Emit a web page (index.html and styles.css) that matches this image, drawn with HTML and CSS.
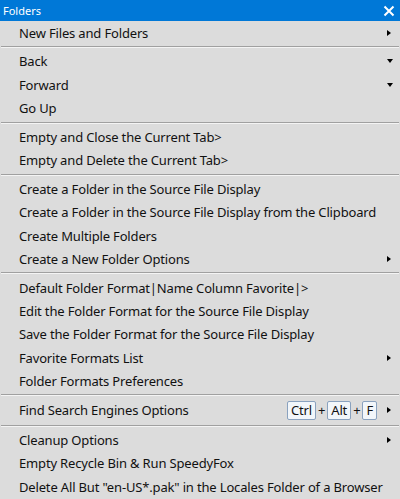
FILE: index.html
```html
<!DOCTYPE html>
<html lang="en">
  <head>
    <meta charset="UTF-8" />
    <title>Folders</title>
    <link rel="stylesheet" href="styles.css">
  </head>
  <body>
    <div class="window">
      <div class="titlebar">
        <span class="title">Folders</span>
        <svg class="close" width="12" height="12" viewBox="0 0 12 12">
          <path d="M1.5 1.5 L10.5 10.5 M10.5 1.5 L1.5 10.5" stroke="#fff" stroke-width="2" fill="none" />
        </svg>
      </div>

      <ul class="menu">
        <li class="item"><span class="label">New Files and Folders</span><span class="sub"></span></li>
        <li class="sep"></li>
        <li class="item"><span class="label">Back</span><span class="drop"></span></li>
        <li class="item"><span class="label">Forward</span><span class="drop"></span></li>
        <li class="item"><span class="label">Go Up</span></li>
        <li class="sep"></li>
        <li class="item"><span class="label">Empty and Close the Current Tab&gt;</span></li>
        <li class="item"><span class="label">Empty and Delete the Current Tab&gt;</span></li>
        <li class="sep"></li>
        <li class="item"><span class="label">Create a Folder in the Source File Display</span></li>
        <li class="item"><span class="label">Create a Folder in the Source File Display from the Clipboard</span></li>
        <li class="item"><span class="label">Create Multiple Folders</span></li>
        <li class="item"><span class="label">Create a New Folder Options</span><span class="sub"></span></li>
        <li class="sep"></li>
        <li class="item"><span class="label">Default Folder Format|Name Column Favorite|&gt;</span></li>
        <li class="item"><span class="label">Edit the Folder Format for the Source File Display</span></li>
        <li class="item"><span class="label">Save the Folder Format for the Source File Display</span></li>
        <li class="item"><span class="label">Favorite Formats List</span><span class="sub"></span></li>
        <li class="item"><span class="label">Folder Formats Preferences</span></li>
        <li class="sep"></li>
        <li class="item tall">
          <span class="label">Find Search Engines Options</span>
          <span class="keys">
            <kbd>Ctrl</kbd><span class="plus">+</span><kbd>Alt</kbd><span class="plus">+</span><kbd>F</kbd>
          </span>
          <span class="sub"></span>
        </li>
        <li class="sep"></li>
        <li class="item"><span class="label">Cleanup Options</span><span class="sub"></span></li>
        <li class="item"><span class="label">Empty Recycle Bin &amp; Run SpeedyFox</span></li>
        <li class="item"><span class="label">Delete All But "en-US*.pak" in the Locales Folder of a Browser</span></li>
      </ul>
    </div>
  </body>
</html>
```

FILE: styles.css
```css
* {
  margin: 0;
  padding: 0;
  box-sizing: border-box;
}
body {
  width: 400px;
  height: 499px;
  overflow: hidden;
  background: #dcdcdc;
  font-family: "Noto Sans", sans-serif;
  font-size: 13px;
  letter-spacing: -0.16px;
  color: #111;
}
.titlebar {
  height: 21px;
  background: #0078d7;
  color: #fff;
  display: flex;
  align-items: center;
  justify-content: space-between;
  padding: 0 5px 0 3px;
}
.title {
  font-size: 11px;
  letter-spacing: 0;
}
.close {
  display: block;
}
.menu {
  list-style: none;
}
.item {
  height: 23.3px;
  display: flex;
  align-items: center;
  padding: 0 9px 0 19px;
  white-space: nowrap;
}
.item.tall {
  height: 25px;
}
.label {
  flex: 1;
}
.sep {
  height: 0;
  margin: 2px 1px 1.5px;
  border-top: 1px solid #a0a0a0;
  border-bottom: 1px solid #f4f4f4;
}
.sub {
  width: 0;
  height: 0;
  border-top: 3.5px solid transparent;
  border-bottom: 3.5px solid transparent;
  border-left: 4px solid #000;
  margin-left: 10px;
}
.drop {
  width: 0;
  height: 0;
  border-left: 3.5px solid transparent;
  border-right: 3.5px solid transparent;
  border-top: 4px solid #000;
  margin-right: -2px;
}
.keys {
  display: flex;
  align-items: center;
}
kbd {
  font-family: inherit;
  font-size: 13px;
  line-height: 15px;
  padding: 1px 3px;
  background: #f2f6fa;
  border: 1px solid #8aa2bf;
  border-radius: 2px;
}
.plus {
  margin: 0 2px;
}
```
